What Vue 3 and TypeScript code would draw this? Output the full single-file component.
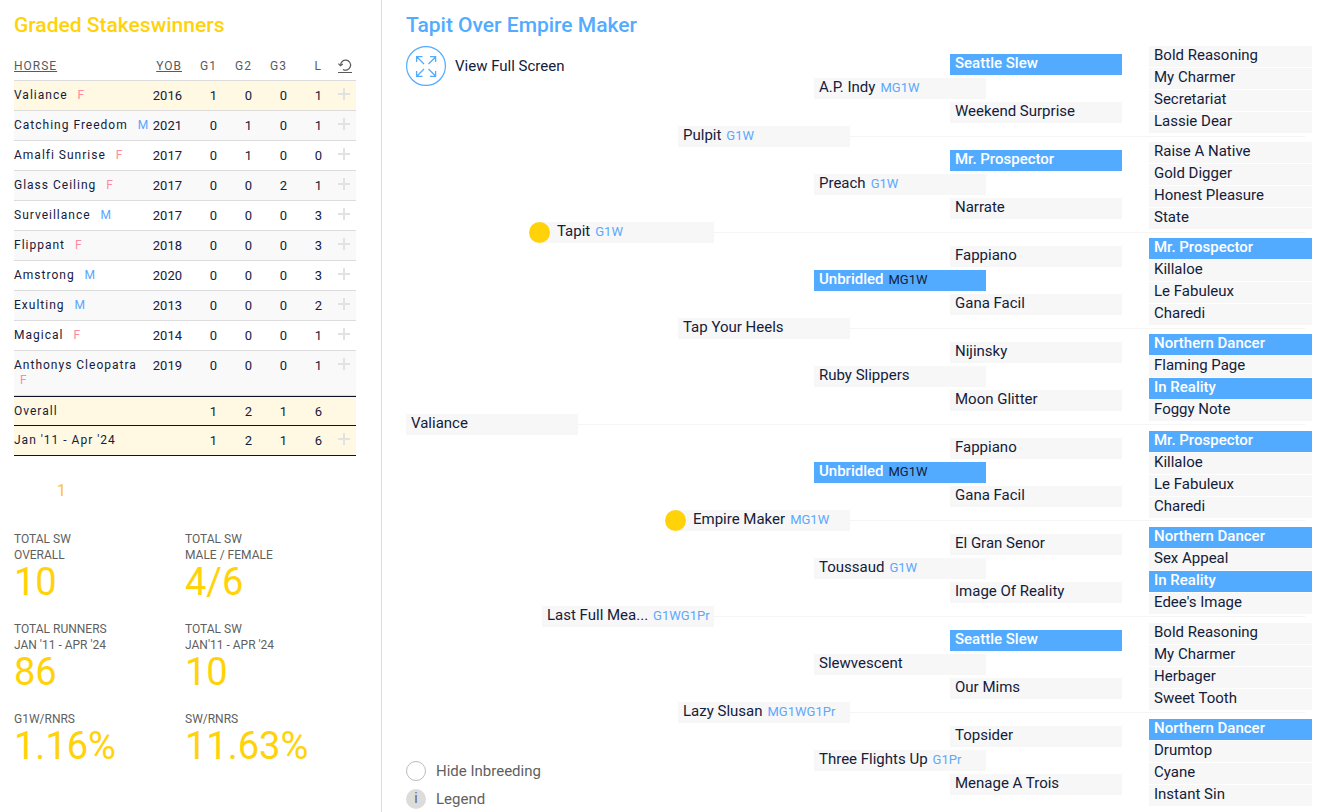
<script setup lang="ts">
import { ref } from 'vue'

interface Winner {
  name: string
  sex: 'F' | 'M'
  yob: number
  counts: number[]
}

interface Horse {
  name: string
  award?: string
  inbred?: boolean
  dot?: boolean
}

const winners: Winner[] = [
  { name: 'Valiance', sex: 'F', yob: 2016, counts: [1, 0, 0, 1] },
  { name: 'Catching Freedom', sex: 'M', yob: 2021, counts: [0, 1, 0, 1] },
  { name: 'Amalfi Sunrise', sex: 'F', yob: 2017, counts: [0, 1, 0, 0] },
  { name: 'Glass Ceiling', sex: 'F', yob: 2017, counts: [0, 0, 2, 1] },
  { name: 'Surveillance', sex: 'M', yob: 2017, counts: [0, 0, 0, 3] },
  { name: 'Flippant', sex: 'F', yob: 2018, counts: [0, 0, 0, 3] },
  { name: 'Amstrong', sex: 'M', yob: 2020, counts: [0, 0, 0, 3] },
  { name: 'Exulting', sex: 'M', yob: 2013, counts: [0, 0, 0, 2] },
  { name: 'Magical', sex: 'F', yob: 2014, counts: [0, 0, 0, 1] },
  { name: 'Anthonys Cleopatra', sex: 'F', yob: 2019, counts: [0, 0, 0, 1] },
]

const totals = [
  { label: 'Overall', counts: [1, 2, 1, 6], expandable: false },
  { label: "Jan '11 - Apr '24", counts: [1, 2, 1, 6], expandable: true },
]

const stats = [
  { lines: ['TOTAL SW', 'OVERALL'], value: '10' },
  { lines: ['TOTAL SW', 'MALE / FEMALE'], value: '4/6' },
  { lines: ['TOTAL RUNNERS', "JAN '11 - APR '24"], value: '86' },
  { lines: ['TOTAL SW', "JAN'11 - APR '24"], value: '10' },
  { lines: ['G1W/RNRS'], value: '1.16%' },
  { lines: ['SW/RNRS'], value: '11.63%' },
]

// One array per generation, each read from the top of the tree down.
const generations: Horse[][] = [
  [{ name: 'Valiance' }],
  [{ name: 'Tapit', award: 'G1W', dot: true }, { name: 'Last Full Mea...', award: 'G1WG1Pr' }],
  [
    { name: 'Pulpit', award: 'G1W' },
    { name: 'Tap Your Heels' },
    { name: 'Empire Maker', award: 'MG1W', dot: true },
    { name: 'Lazy Slusan', award: 'MG1WG1Pr' },
  ],
  [
    { name: 'A.P. Indy', award: 'MG1W' },
    { name: 'Preach', award: 'G1W' },
    { name: 'Unbridled', award: 'MG1W', inbred: true },
    { name: 'Ruby Slippers' },
    { name: 'Unbridled', award: 'MG1W', inbred: true },
    { name: 'Toussaud', award: 'G1W' },
    { name: 'Slewvescent' },
    { name: 'Three Flights Up', award: 'G1Pr' },
  ],
  [
    { name: 'Seattle Slew', inbred: true },
    { name: 'Weekend Surprise' },
    { name: 'Mr. Prospector', inbred: true },
    { name: 'Narrate' },
    { name: 'Fappiano' },
    { name: 'Gana Facil' },
    { name: 'Nijinsky' },
    { name: 'Moon Glitter' },
    { name: 'Fappiano' },
    { name: 'Gana Facil' },
    { name: 'El Gran Senor' },
    { name: 'Image Of Reality' },
    { name: 'Seattle Slew', inbred: true },
    { name: 'Our Mims' },
    { name: 'Topsider' },
    { name: 'Menage A Trois' },
  ],
]

const founders: Horse[][] = [
  [{ name: 'Bold Reasoning' }, { name: 'My Charmer' }, { name: 'Secretariat' }, { name: 'Lassie Dear' }],
  [{ name: 'Raise A Native' }, { name: 'Gold Digger' }, { name: 'Honest Pleasure' }, { name: 'State' }],
  [{ name: 'Mr. Prospector', inbred: true }, { name: 'Killaloe' }, { name: 'Le Fabuleux' }, { name: 'Charedi' }],
  [{ name: 'Northern Dancer', inbred: true }, { name: 'Flaming Page' }, { name: 'In Reality', inbred: true }, { name: 'Foggy Note' }],
  [{ name: 'Mr. Prospector', inbred: true }, { name: 'Killaloe' }, { name: 'Le Fabuleux' }, { name: 'Charedi' }],
  [{ name: 'Northern Dancer', inbred: true }, { name: 'Sex Appeal' }, { name: 'In Reality', inbred: true }, { name: "Edee's Image" }],
  [{ name: 'Bold Reasoning' }, { name: 'My Charmer' }, { name: 'Herbager' }, { name: 'Sweet Tooth' }],
  [{ name: 'Northern Dancer', inbred: true }, { name: 'Drumtop' }, { name: 'Cyane' }, { name: 'Instant Sin' }],
]

const ROWS = 16

function place(gen: number, index: number) {
  const span = ROWS / 2 ** gen
  return { gridColumn: `g${gen} / e${gen}`, gridRow: `${index * span + 1} / span ${span}` }
}

function placeLine(gen: number, index: number) {
  return { ...place(gen, index), gridColumn: `e${gen} / e5` }
}

const hideInbreeding = ref(false)
</script>

<template>
  <div class="page">
    <aside class="side">
      <h2 class="title gold">Graded Stakeswinners</h2>
      <table class="winners">
        <colgroup>
          <col />
          <col class="c-yob" />
          <col v-for="n in 4" :key="n" class="c-num" />
          <col class="c-act" />
        </colgroup>
        <thead>
          <tr>
            <th class="name"><a href="#horse">HORSE</a></th>
            <th><a href="#yob">YOB</a></th>
            <th>G1</th>
            <th>G2</th>
            <th>G3</th>
            <th>L</th>
            <th class="act">
              <button type="button" class="reset" aria-label="Reset sorting">
                <svg width="14" height="13" viewBox="0 0 14 13" fill="none" stroke="currentColor">
                  <path d="M2.6 6.4A5 5 0 1 1 5 10.4" stroke-width="1.2" />
                  <path d="M0.4 4.6L2.5 6.8L4.8 5" stroke-width="1.2" />
                </svg>
              </button>
            </th>
          </tr>
        </thead>
        <tbody>
          <tr v-for="(w, i) in winners" :key="w.name" :class="{ current: i === 0, alt: i % 2 === 1 }">
            <td class="name">{{ w.name }} <span class="sex" :class="w.sex === 'F' ? 'female' : 'male'">{{ w.sex }}</span></td>
            <td>{{ w.yob }}</td>
            <td v-for="(c, k) in w.counts" :key="k">{{ c }}</td>
            <td class="act">
              <button type="button" class="plus" :aria-label="`Expand ${w.name}`">
                <svg width="12" height="12" viewBox="0 0 12 12"><path d="M6 0V12M0 6H12" stroke="#e2e2e2" stroke-width="2" /></svg>
              </button>
            </td>
          </tr>
        </tbody>
        <tfoot>
          <tr v-for="t in totals" :key="t.label">
            <td class="name" colspan="2">{{ t.label }}</td>
            <td v-for="(c, k) in t.counts" :key="k">{{ c }}</td>
            <td class="act">
              <button v-if="t.expandable" type="button" class="plus" :aria-label="`Expand ${t.label}`">
                <svg width="12" height="12" viewBox="0 0 12 12"><path d="M6 0V12M0 6H12" stroke="#e2e2e2" stroke-width="2" /></svg>
              </button>
            </td>
          </tr>
        </tfoot>
      </table>
      <nav class="pager"><a href="#page-1">1</a></nav>
      <dl class="stats">
        <div v-for="(s, i) in stats" :key="i">
          <dt><span v-for="l in s.lines" :key="l">{{ l }}</span></dt>
          <dd>{{ s.value }}</dd>
        </div>
      </dl>
    </aside>

    <main class="main">
      <h2 class="title blue">Tapit Over Empire Maker</h2>
      <div class="tree">
        <button type="button" class="fullscreen">
          <svg width="40" height="40" viewBox="0 0 40 40" fill="none" stroke="#53abff">
            <circle cx="20" cy="20" r="19.4" stroke-width="1.2" />
            <path d="M18 18L11 11M10.6 16V10.6H16.5M22.5 18L29.5 11M24 10.6H29.6V16M18 23L11 30M10.6 25V30.4H16.5M22.5 23L29.5 30M24 30.4H29.6V25" stroke-width="1.3" />
          </svg>
          View Full Screen
        </button>

        <template v-for="(gen, g) in generations" :key="g">
          <template v-for="(h, i) in gen" :key="i">
            <div v-if="g < 3" class="line" :style="placeLine(g, i)"></div>
            <div class="horse" :class="{ inbred: h.inbred && !hideInbreeding, dotted: h.dot }" :style="place(g, i)">
              <span class="label">{{ h.name }}</span>
              <span v-if="h.award" class="award">{{ h.award }}</span>
            </div>
          </template>
        </template>

        <div v-for="(group, i) in founders" :key="i" class="group" :style="{ gridRow: `${i * 2 + 1} / span 2` }">
          <div v-for="(h, k) in group" :key="k" class="horse" :class="{ inbred: h.inbred && !hideInbreeding }">
            <span class="label">{{ h.name }}</span>
          </div>
        </div>

        <div class="options">
          <label class="option"><input v-model="hideInbreeding" type="checkbox" />Hide Inbreeding</label>
          <button type="button" class="option"><span class="info">i</span>Legend</button>
        </div>
      </div>
    </main>
  </div>
</template>

<style>
body {
  margin: 0;
  background: #fff;
}
</style>

<style scoped>
.page {
  display: grid;
  grid-template-columns: minmax(320px, 382px) minmax(0, 1fr);
  min-height: 100vh;
  font-family: Roboto, "Noto Sans", sans-serif;
  color: #14203a;
}
button {
  border: 0;
  padding: 0;
  background: none;
  color: inherit;
  font: inherit;
  cursor: pointer;
}
svg {
  display: block;
}
.side {
  border-right: 1px solid #dcdcdc;
  padding: 0 25px 0 14px;
}
.main {
  display: flex;
  flex-direction: column;
  padding: 0 7px 3px 24px;
}
.title {
  margin: 0;
  padding-top: 10px;
  font-size: 21px;
  line-height: 30px;
  font-weight: 500;
}
.gold {
  color: #ffd20a;
}
.blue {
  color: #53abff;
}
.winners {
  width: 100%;
  margin-top: 10px;
  table-layout: fixed;
  border-collapse: separate;
  border-spacing: 0;
  font-size: 13px;
  line-height: 15px;
}
.c-yob {
  width: 32px;
}
.c-num {
  width: 35px;
}
.c-act {
  width: 34px;
}
th,
td {
  padding: 7px 0;
  border-bottom: 1px solid #dcdcdc;
  text-align: right;
  vertical-align: top;
  font-weight: 400;
}
th,
.name {
  font-size: 12px;
  letter-spacing: 1px;
}
th {
  padding: 9px 0 6px;
  color: #5a5a5a;
}
th a {
  color: inherit;
}
.name {
  text-align: left;
}
th.act {
  padding-right: 4px;
}
td.act {
  padding-right: 6px;
}
.reset {
  display: block;
  margin-left: auto;
  border-bottom: 1px solid #5a5a5a;
}
.plus {
  display: block;
  margin-left: auto;
}
.sex {
  margin-left: 6px;
}
.female {
  color: #ff8aa0;
}
.male {
  color: #5aa5ff;
}
.alt td {
  background: #f9f9f9;
}
.current td,
tfoot td {
  background: #fff9e3;
}
tfoot td {
  border-bottom-color: #0c1428;
}
tfoot tr:first-child td {
  padding-bottom: 6px;
  border-top: 1px solid #0c1428;
}
.pager {
  padding: 25px 0 30px 43px;
  font-size: 16px;
  line-height: 20px;
}
.pager a {
  color: #ffc320;
  text-decoration: none;
}
.stats {
  display: grid;
  grid-template-columns: 1fr 1fr;
  gap: 20px 0;
  margin: 0;
}
dt {
  color: #5f5f5f;
  font-size: 12px;
  line-height: 16px;
}
dt span {
  display: block;
}
dd {
  margin: 0;
  color: #ffd20a;
  font-size: 38px;
  line-height: 38px;
}
.tree {
  flex: 1;
  display: grid;
  grid-template-columns:
    [g0] 136fr [g1] 36fr [e0] 100fr [g2] 36fr [e1] 100fr [g3] 36fr [e2] 100fr
    [g4] 36fr [e3] 136fr [e4] 27fr [g5] 163fr [e5];
  grid-template-rows: repeat(16, minmax(48px, 1fr));
  font-size: 15px;
  line-height: 18px;
}
.horse {
  position: relative;
  align-self: center;
  height: 21px;
  padding-left: 5px;
  background: #f7f7f7;
  white-space: nowrap;
}
.award {
  margin-left: 5px;
  color: #5ba8ff;
  font-size: 13px;
}
.inbred {
  background: #53abff;
}
.inbred .label {
  color: #fff;
  font-weight: 500;
}
.inbred .award {
  color: #14203a;
}
.dotted {
  padding-left: 15px;
}
.dotted::before {
  content: "";
  position: absolute;
  left: -13px;
  top: 0;
  width: 21px;
  height: 21px;
  border-radius: 50%;
  background: #ffd20a;
}
.line {
  align-self: center;
  height: 1px;
  margin-right: 7px;
  background: #f5f5f5;
}
.group {
  grid-column: g5 / e5;
  display: flex;
  flex-direction: column;
  gap: 1px;
  padding-top: 6px;
}
.group .horse {
  align-self: stretch;
}
.fullscreen {
  grid-column: g0 / g2;
  grid-row: 1;
  place-self: start;
  display: flex;
  align-items: center;
  gap: 9px;
  padding-top: 6px;
}
.options {
  grid-column: g0 / e1;
  grid-row: 15 / span 2;
  place-self: end start;
  display: grid;
  gap: 8px;
  color: #5f5f5f;
}
.option {
  display: flex;
  align-items: center;
  gap: 10px;
  line-height: 20px;
}
.option input {
  appearance: none;
  width: 20px;
  height: 20px;
  margin: 0;
  border: 1px solid #bdbdbd;
  border-radius: 50%;
}
.option input:checked {
  background: #53abff;
}
.info {
  width: 20px;
  height: 20px;
  border-radius: 50%;
  background: #dcdcdc;
  font-size: 14px;
  line-height: 18px;
}
</style>
